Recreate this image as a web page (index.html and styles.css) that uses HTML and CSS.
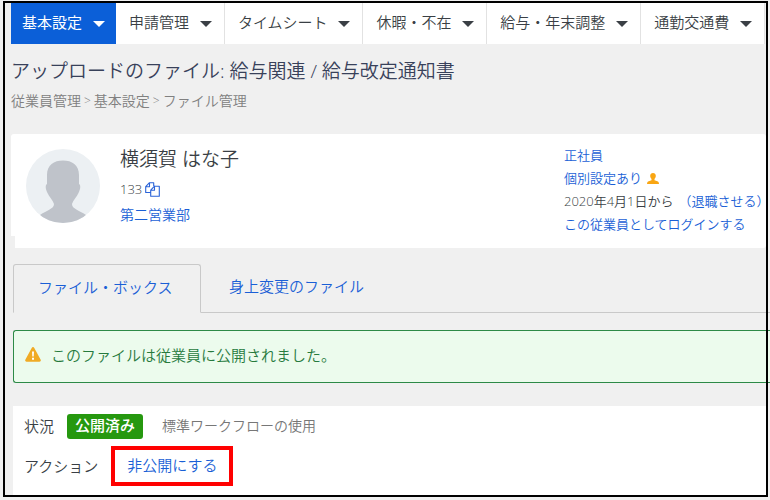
FILE: index.html
```html
<!DOCTYPE html>
<html lang="ja">
<head>
<meta charset="utf-8">
<title>給与改定通知書</title>
<link rel="stylesheet" href="styles.css">
</head>
<body>
<div class="page">
  <nav class="menu">
    <button class="menu-item active" type="button">基本設定<span class="caret"></span></button>
    <button class="menu-item" type="button">申請管理<span class="caret"></span></button>
    <button class="menu-item" type="button">タイムシート<span class="caret"></span></button>
    <button class="menu-item" type="button">休暇・不在<span class="caret"></span></button>
    <button class="menu-item" type="button">給与・年末調整<span class="caret"></span></button>
    <button class="menu-item" type="button">通勤交通費<span class="caret"></span></button>
  </nav>
  <header class="heading">
    <h1>アップロードのファイル: 給与関連 / 給与改定通知書</h1>
    <p class="crumbs"><span>従業員管理</span><span class="sep">&gt;</span><span>基本設定</span><span class="sep">&gt;</span><span>ファイル管理</span></p>
  </header>
  <section class="profile">
    <svg class="avatar" viewBox="0 0 74 74" aria-hidden="true">
      <defs><clipPath id="disc"><circle cx="37" cy="37" r="37"/></clipPath></defs>
      <g clip-path="url(#disc)">
        <rect width="74" height="74" fill="#ecf0f3"/>
        <path fill="#bfc3ca" d="M21 35V26C21 16 28 11.500 37 11.500S53 16 53 26V35C55 36 54.500 40 52.500 44C51 48 47 51 46 55C46 60 53 61 60 66L64 74H10L14 66C21 61 28 60 28 55C27 51 23 48 21.500 44C19.500 40 19 36 21 35Z"/>
      </g>
    </svg>
    <div class="identity">
      <h2>横須賀 はな子</h2>
      <div class="code">133
        <svg class="copy" viewBox="0 0 15 15" aria-hidden="true"><path fill="none" stroke="#2a63d8" stroke-width="1.100" stroke-linejoin="round" d="M5.500 10.500H.7V4.700L4.500.7H8.700V4M4.500.7V4.700H.7M9.500 4.200H14.300V14.300H5.700V8.200L9.500 4.200V8.200H5.700"/></svg>
      </div>
      <a href="#">第二営業部</a>
    </div>
    <div class="employment">
      <a href="#">正社員</a>
      <div class="line"><a href="#">個別設定あり</a>
        <svg class="person" viewBox="0 0 12 11" aria-hidden="true"><path fill="#f9a613" d="M6 0C8 0 9 1.400 8.800 3.200C8.600 4.700 7.800 5.400 7.500 6V7.200L11 8.400Q12 9 12 11H0Q0 9 1 8.400L4.500 7.200V6C4.200 5.400 3.400 4.700 3.200 3.200C3 1.400 4 0 6 0Z"/></svg>
      </div>
      <div class="line"><span>2020年4月1日から</span><a href="#">（退職させる）</a></div>
      <a href="#">この従業員としてログインする</a>
    </div>
  </section>
  <nav class="tabs">
    <a class="tab selected" href="#">ファイル・ボックス</a>
    <a class="tab" href="#">身上変更のファイル</a>
  </nav>
  <div class="notice" role="status">
    <svg class="warning" viewBox="0 0 16 15" aria-hidden="true"><path fill="#f0ab25" d="M8 0Q8.800 0 9.300 1L15.700 12.800Q16.300 14.600 14.500 14.700H1.500Q-.3 14.600.3 12.800L6.700 1Q7.200 0 8 0Z"/><path fill="#fff" d="M7 4.500H9L8.700 9.500H7.300ZM7 10.700H9V12.700H7Z"/></svg>
    <span>このファイルは従業員に公開されました。</span>
  </div>
  <section class="status">
    <div class="row"><span>状況</span><span class="badge">公開済み</span><span class="workflow">標準ワークフローの使用</span></div>
    <div class="row"><span>アクション</span><a class="unpublish" href="#">非公開にする</a></div>
  </section>
  <div class="frame"></div>
</div>
</body>
</html>
```
FILE: styles.css
```css
* { box-sizing: border-box; }
body {
  margin: 0;
  background: #f0f0f0;
  color: #3a3f45;
  font: 350 15px/22px "Open Sans", "Noto Sans CJK JP", sans-serif;
}
h1, h2, p { margin: 0; font-weight: inherit; }
a { color: #1a5fd6; text-decoration: none; }
svg { display: block; flex: none; }
.page {
  position: relative;
  padding: 3px 0 6px 11px;
  overflow: hidden;
}
.frame {
  position: absolute;
  inset: 1px 2px 4px 3px;
  border: 2px solid #000;
  pointer-events: none;
}
.menu { display: flex; margin-right: 5px; background: #fff; }
.menu-item {
  flex: 1 1 auto;
  display: flex;
  align-items: center;
  justify-content: space-between;
  height: 41px;
  padding: 0 12px 4px 13px;
  border: 0;
  border-right: 1px solid #e2e2e2;
  background: #fff;
  color: inherit;
  font: inherit;
  white-space: nowrap;
}
.menu-item.active {
  flex: none;
  gap: 11px;
  padding: 0 11px 4px;
  border: 0;
  background: #0b5fd8;
  color: #fff;
  font-weight: 400;
}
.caret {
  margin-top: 4px;
  border: 6px solid transparent;
  border-top-color: currentColor;
  border-bottom: 0;
}
.heading { padding: 12px 0 22px; }
.heading h1 { font-size: 19px; line-height: 30px; color: #38415a; }
.crumbs {
  display: flex;
  gap: 3px;
  padding-top: 4px;
  font-size: 14px;
  line-height: 22px;
  color: #808080;
}
.sep { font-size: 12px; }
.profile {
  position: relative;
  display: flex;
  height: 114px;
  margin-right: 4px;
  padding: 10px 0 0 15px;
  background: #fff;
  border-radius: 3px;
}
.profile::after {
  content: "";
  position: absolute;
  left: 0;
  bottom: 0;
  width: 4px;
  height: 12px;
  background: #f0f0f0;
}
.avatar { width: 74px; height: 74px; margin-top: 5px; }
.identity { flex: 1; padding-left: 20px; font-size: 14px; }
.identity h2 { font-size: 19px; line-height: 30px; }
.code { display: flex; align-items: center; gap: 3px; height: 30px; font-size: 13px; }
.copy { width: 15px; height: 15px; }
.employment {
  flex: none;
  width: 202px;
  font-size: 13px;
  line-height: 23px;
  white-space: nowrap;
}
.employment > a { display: block; }
.line { display: flex; align-items: center; gap: 5px; }
.person { width: 12px; height: 11px; }
.tabs { display: flex; padding: 16px 0 0 2px; line-height: 44px; }
.tab {
  padding: 0 28px 4px;
  border-bottom: 1px solid #c9c9c9;
}
.tab:last-child { flex: 1; }
.tab.selected {
  flex: none;
  width: 188px;
  padding: 0 24px 3px;
  border: 1px solid #c9c9c9;
  border-bottom-color: transparent;
  border-radius: 3px 3px 0 0;
}
.notice {
  display: flex;
  align-items: center;
  gap: 10px;
  height: 53px;
  margin: 17px 0 23px 2px;
  padding: 0 11px 4px;
  border: 1px solid #2d8a47;
  border-right: 0;
  border-radius: 3px 0 0 3px;
  background: #ecfbed;
  color: #277a3d;
}
.warning { width: 16px; height: 15px; }
.status {
  margin: 0 4px 0 2px;
  padding: 0 11px 9px;
  background: #fff;
}
.row { display: flex; align-items: center; gap: 13px; height: 40px; }
.badge {
  padding: 0 8px 2px;
  border-radius: 3px;
  background: #26980f;
  color: #fff;
  font-weight: 500;
  line-height: 23px;
}
.workflow { padding-left: 6px; color: #777; font-size: 14px; }
.unpublish { padding: 5px 12px 7px; border: 4px solid #f00; line-height: 20px; }
```
